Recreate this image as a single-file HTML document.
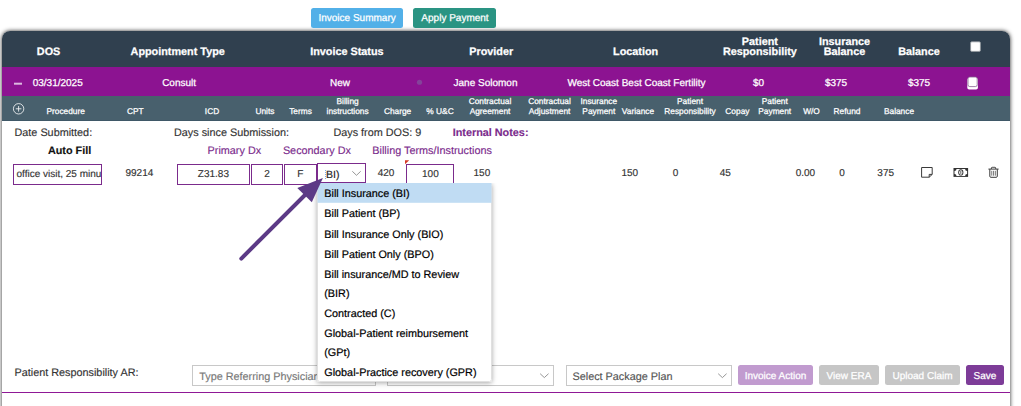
<!DOCTYPE html>
<html>
<head>
<meta charset="utf-8">
<style>
*{box-sizing:border-box;margin:0;padding:0}
html,body{text-rendering:geometricPrecision;width:1021px;height:406px;overflow:hidden;background:#fff;font-family:"Liberation Sans",sans-serif;color:#333}
.t{position:absolute;white-space:nowrap;-webkit-text-stroke:0.15px}
.w{color:#fff;-webkit-text-stroke:0.25px}
.bd{font-weight:bold}
.pu{color:#7b2b8c}
#panel{position:absolute;left:2px;top:31px;width:1008px;height:400px;border-radius:8px 8px 0 0;background:#fff;box-shadow:0 0 4px rgba(0,0,0,.85);overflow:hidden}
#dd{position:absolute;left:317px;top:183px;width:175px;height:199px;background:#fff;border-radius:2px;box-shadow:0 1px 5px rgba(0,0,0,.35);clip-path:inset(0 -12px -12px -12px)}
</style>
</head>
<body>

<div id="panel"></div>
<svg style="position:absolute;left:0;top:0" width="1021" height="406" viewBox="0 0 1021 406">
<defs><clipPath id="pc"><path d="M2 406V39A8 8 0 0 1 10 31H1002A8 8 0 0 1 1010 39V406Z"/></clipPath></defs>
<g clip-path="url(#pc)">
<rect x="2.00" y="67.00" width="1008.00" height="29.00" rx="0" fill="#8c1391"/>
<rect x="2.00" y="30.00" width="1008.00" height="37.00" rx="0" fill="#30404f"/>
<rect x="2.00" y="96.00" width="1008.00" height="25.00" rx="0" fill="#48606d"/>
<rect x="2.00" y="120.00" width="1008.00" height="1.00" rx="0" fill="#3f5867"/>
<rect x="2.00" y="392.00" width="1008.00" height="1.00" rx="0" fill="#8f1896"/>
</g>
<rect x="311.00" y="8.00" width="92.00" height="20.00" rx="2.5" fill="#52b0e8"/>
<rect x="413.00" y="8.00" width="83.00" height="20.00" rx="2.5" fill="#2a9483"/>
<rect x="970.60" y="41.80" width="9.80" height="9.60" rx="1.2" fill="#fff" stroke="#8f969c" stroke-width="0.8"/>
<rect x="14.00" y="82.70" width="8.00" height="2.00" rx="0" fill="#dcb9e0"/>
<circle cx="419.5" cy="82.25" r="2.6" fill="#84439a"/>
<rect x="967.30" y="78.00" width="10.60" height="11.50" rx="1.8" fill="#fff"/>
<rect x="968.00" y="77.00" width="9.20" height="9.60" rx="1.8" fill="#fff" stroke="#85608f" stroke-width="0.8"/>
<circle cx="18.6" cy="108.8" r="5.2" fill="none" stroke="#fff" stroke-width="0.8"/><path d="M15.8 108.8H21.4M18.6 106V111.6" stroke="#fff" stroke-width="0.8" fill="none"/>
<rect x="13.50" y="164.50" width="88.00" height="20.00" rx="0" fill="#fff" stroke="#7b2b8c" stroke-width="1"/>
<rect x="177.50" y="164.50" width="72.00" height="20.00" rx="0" fill="#fff" stroke="#7b2b8c" stroke-width="1"/>
<rect x="251.50" y="164.50" width="31.00" height="20.00" rx="0" fill="#fff" stroke="#7b2b8c" stroke-width="1"/>
<rect x="284.50" y="164.50" width="32.00" height="20.00" rx="0" fill="#fff" stroke="#7b2b8c" stroke-width="1"/>
<rect x="406.50" y="164.50" width="47.00" height="20.00" rx="0" fill="#fff" stroke="#7b2b8c" stroke-width="1"/>
<rect x="317.50" y="163.50" width="48.00" height="19.00" rx="0" fill="#fff" stroke="#7b2b8c" stroke-width="1"/>
<path d="M352.3 171.3L356.5 175.3L360.7 171.3" fill="none" stroke="#8a8a8a" stroke-width="0.9"/>
<path d="M405 160.2H409.2L405 164.3Z" fill="#d63a28"/>
<path d="M325.6 170V180" stroke="#5a9be6" stroke-width="0.9" stroke-dasharray="1 1" fill="none"/>
<rect x="192.50" y="365.50" width="183.00" height="20.00" rx="0" fill="#fff" stroke="#c8c8c8" stroke-width="1"/>
<rect x="387.50" y="365.50" width="166.00" height="20.00" rx="0" fill="#fff" stroke="#c8c8c8" stroke-width="1"/>
<rect x="566.50" y="365.50" width="165.00" height="20.00" rx="0" fill="#fff" stroke="#c8c8c8" stroke-width="1"/>
<path d="M540.15 373.7L544.35 377.6L548.55 373.7" fill="none" stroke="#8a8a8a" stroke-width="0.9"/>
<path d="M718.20 373.7L722.4 377.6L726.60 373.7" fill="none" stroke="#8a8a8a" stroke-width="0.9"/>
<rect x="738.00" y="365.00" width="75.00" height="20.00" rx="2.5" fill="#c19bcf"/>
<rect x="819.00" y="365.00" width="60.00" height="20.00" rx="2.5" fill="#c6c6c6"/>
<rect x="885.00" y="365.00" width="75.00" height="20.00" rx="2.5" fill="#c6c6c6"/>
<rect x="966.00" y="365.00" width="38.00" height="20.00" rx="2.5" fill="#7d3c98"/>
<g fill="none" stroke="#3a3a3a" stroke-width="1"><path d="M921.6 167.5H932.2V174.4L929.2 177.2H921.6Z" stroke-linejoin="round"/><path d="M932.2 174.4H929.2V177.2" stroke-width="1"/></g>
<g><rect x="953.5" y="168" width="14.6" height="8.9" fill="#333"/><path d="M956.5 169H965.1A2 2 0 0 0 967.1 171V173.9A2 2 0 0 0 965.1 175.9H956.5A2 2 0 0 0 954.5 173.9V171A2 2 0 0 0 956.5 169Z" fill="#fff"/><ellipse cx="960.8" cy="172.45" rx="2.6" ry="3.1" fill="#333"/><ellipse cx="960.8" cy="172.45" rx="1.65" ry="2.2" fill="#fff"/><rect x="960.45" y="171" width="0.8" height="2.9" fill="#333"/></g>
<g fill="none" stroke="#3a3a3a" stroke-width="1"><path d="M988.4 169.1H998.6"/><path d="M991.4 169V168Q991.4 167.3 992.1 167.3H995Q995.7 167.3 995.7 168V169" stroke-width="0.9"/><path d="M989.8 169.2V176.2Q989.8 177.3 990.9 177.3H996.2Q997.3 177.3 997.3 176.2V169.2"/><path d="M991.75 170.8V175.7M993.55 170.8V175.7M995.35 170.8V175.7" stroke-width="0.8" stroke="#555"/></g>
</svg>
<div class="t w" style="left:357.1px;top:13px;font-size:10px;line-height:11px;transform:translateX(-50%);">Invoice Summary</div>
<div class="t w" style="left:455px;top:13px;font-size:10px;line-height:11px;transform:translateX(-50%);">Apply Payment</div>
<div class="t w bd" style="left:48.6px;top:46px;font-size:10.83px;line-height:12px;transform:translateX(-50%);">DOS</div>
<div class="t w bd" style="left:177.7px;top:46px;font-size:10.83px;line-height:12px;transform:translateX(-50%);">Appointment Type</div>
<div class="t w bd" style="left:346.9px;top:46px;font-size:10.83px;line-height:12px;transform:translateX(-50%);">Invoice Status</div>
<div class="t w bd" style="left:491.25px;top:46px;font-size:10.83px;line-height:12px;transform:translateX(-50%);">Provider</div>
<div class="t w bd" style="left:635.6px;top:46px;font-size:10.83px;line-height:12px;transform:translateX(-50%);">Location</div>
<div class="t w bd" style="left:919px;top:46px;font-size:10.83px;line-height:12px;transform:translateX(-50%);">Balance</div>
<div class="t w bd" style="left:759.9px;top:36px;font-size:10.83px;line-height:12px;transform:translateX(-50%);">Patient</div>
<div class="t w bd" style="left:759.9px;top:46px;font-size:10.83px;line-height:12px;transform:translateX(-50%);">Responsibility</div>
<div class="t w bd" style="left:844.5px;top:36px;font-size:10.83px;line-height:12px;transform:translateX(-50%);">Insurance</div>
<div class="t w bd" style="left:844.5px;top:46px;font-size:10.83px;line-height:12px;transform:translateX(-50%);">Balance</div>
<div class="t w" style="left:32.7px;top:78px;font-size:10px;line-height:11px;">03/31/2025</div>
<div class="t w" style="left:179.1px;top:78px;font-size:10px;line-height:11px;transform:translateX(-50%);">Consult</div>
<div class="t w" style="left:340px;top:78px;font-size:10px;line-height:11px;transform:translateX(-50%);">New</div>
<div class="t w" style="left:485.5px;top:78px;font-size:10px;line-height:11px;transform:translateX(-50%);">Jane Solomon</div>
<div class="t w" style="left:636.5px;top:78px;font-size:10px;line-height:11px;transform:translateX(-50%);">West Coast Best Coast Fertility</div>
<div class="t w" style="left:758.5px;top:78px;font-size:10px;line-height:11px;transform:translateX(-50%);">$0</div>
<div class="t w" style="left:836px;top:78px;font-size:10px;line-height:11px;transform:translateX(-50%);">$375</div>
<div class="t w" style="left:919px;top:78px;font-size:10px;line-height:11px;transform:translateX(-50%);">$375</div>
<div class="t w" style="left:65.7px;top:106px;font-size:8.33px;line-height:10px;transform:translateX(-50%);">Procedure</div>
<div class="t w" style="left:135.4px;top:106px;font-size:8.33px;line-height:10px;transform:translateX(-50%);">CPT</div>
<div class="t w" style="left:212px;top:106px;font-size:8.33px;line-height:10px;transform:translateX(-50%);">ICD</div>
<div class="t w" style="left:264.9px;top:106px;font-size:8.33px;line-height:10px;transform:translateX(-50%);">Units</div>
<div class="t w" style="left:300.5px;top:106px;font-size:8.33px;line-height:10px;transform:translateX(-50%);">Terms</div>
<div class="t w" style="left:397.6px;top:106px;font-size:8.33px;line-height:10px;transform:translateX(-50%);">Charge</div>
<div class="t w" style="left:440px;top:106px;font-size:8.33px;line-height:10px;transform:translateX(-50%);">% U&amp;C</div>
<div class="t w" style="left:638px;top:106px;font-size:8.33px;line-height:10px;transform:translateX(-50%);">Variance</div>
<div class="t w" style="left:737.4px;top:106px;font-size:8.33px;line-height:10px;transform:translateX(-50%);">Copay</div>
<div class="t w" style="left:811.5px;top:106px;font-size:8.33px;line-height:10px;transform:translateX(-50%);">W/O</div>
<div class="t w" style="left:847px;top:106px;font-size:8.33px;line-height:10px;transform:translateX(-50%);">Refund</div>
<div class="t w" style="left:899px;top:106px;font-size:8.33px;line-height:10px;transform:translateX(-50%);">Balance</div>
<div class="t w" style="left:347.6px;top:96px;font-size:8.33px;line-height:10px;transform:translateX(-50%);">Billing</div>
<div class="t w" style="left:347.6px;top:106px;font-size:8.33px;line-height:10px;transform:translateX(-50%);">instructions</div>
<div class="t w" style="left:490px;top:96px;font-size:8.33px;line-height:10px;transform:translateX(-50%);">Contractual</div>
<div class="t w" style="left:490px;top:106px;font-size:8.33px;line-height:10px;transform:translateX(-50%);">Agreement</div>
<div class="t w" style="left:549.5px;top:96px;font-size:8.33px;line-height:10px;transform:translateX(-50%);">Contractual</div>
<div class="t w" style="left:549.5px;top:106px;font-size:8.33px;line-height:10px;transform:translateX(-50%);">Adjustment</div>
<div class="t w" style="left:598.8px;top:96px;font-size:8.33px;line-height:10px;transform:translateX(-50%);">Insurance</div>
<div class="t w" style="left:598.8px;top:106px;font-size:8.33px;line-height:10px;transform:translateX(-50%);">Payment</div>
<div class="t w" style="left:690px;top:96px;font-size:8.33px;line-height:10px;transform:translateX(-50%);">Patient</div>
<div class="t w" style="left:690px;top:106px;font-size:8.33px;line-height:10px;transform:translateX(-50%);">Responsibility</div>
<div class="t w" style="left:774.75px;top:96px;font-size:8.33px;line-height:10px;transform:translateX(-50%);">Patient</div>
<div class="t w" style="left:774.75px;top:106px;font-size:8.33px;line-height:10px;transform:translateX(-50%);">Payment</div>
<div class="t " style="left:14.5px;top:127px;font-size:10.83px;line-height:12px;">Date Submitted:</div>
<div class="t " style="left:174px;top:127px;font-size:10.83px;line-height:12px;">Days since Submission:</div>
<div class="t " style="left:333.4px;top:127px;font-size:10.83px;line-height:12px;">Days from DOS: 9</div>
<div class="t pu bd" style="left:452.7px;top:127px;font-size:10.83px;line-height:12px;">Internal Notes:</div>
<div class="t bd" style="left:69.6px;top:145px;font-size:10.83px;line-height:12px;transform:translateX(-50%);color:#111;">Auto Fill</div>
<div class="t pu" style="left:207.6px;top:145px;font-size:10.83px;line-height:12px;">Primary Dx</div>
<div class="t pu" style="left:282.9px;top:145px;font-size:10.83px;line-height:12px;">Secondary Dx</div>
<div class="t pu" style="left:372.3px;top:145px;font-size:10.83px;line-height:12px;">Billing Terms/Instructions</div>
<div style="position:absolute;left:14px;top:165px;width:87px;height:18px;overflow:hidden"><div class="t" style="left:2.5px;top:4px;font-size:10px;line-height:11px">office visit, 25 minutes</div></div>
<div class="t " style="left:213.4px;top:169px;font-size:10px;line-height:11px;transform:translateX(-50%);">Z31.83</div>
<div class="t " style="left:267px;top:169px;font-size:10px;line-height:11px;transform:translateX(-50%);">2</div>
<div class="t " style="left:300.4px;top:169px;font-size:10px;line-height:11px;transform:translateX(-50%);">F</div>
<div class="t " style="left:326.1px;top:169px;font-size:10.5px;line-height:12px;color:#222;">BI)</div>
<div class="t " style="left:430.4px;top:169px;font-size:10px;line-height:11px;transform:translateX(-50%);">100</div>
<div class="t " style="left:139.4px;top:168px;font-size:10px;line-height:11px;transform:translateX(-50%);">99214</div>
<div class="t " style="left:386px;top:168px;font-size:10px;line-height:11px;transform:translateX(-50%);">420</div>
<div class="t " style="left:481.9px;top:168px;font-size:10px;line-height:11px;transform:translateX(-50%);">150</div>
<div class="t " style="left:629.75px;top:168px;font-size:10px;line-height:11px;transform:translateX(-50%);">150</div>
<div class="t " style="left:675.5px;top:168px;font-size:10px;line-height:11px;transform:translateX(-50%);">0</div>
<div class="t " style="left:725.25px;top:168px;font-size:10px;line-height:11px;transform:translateX(-50%);">45</div>
<div class="t " style="left:805.4px;top:168px;font-size:10px;line-height:11px;transform:translateX(-50%);">0.00</div>
<div class="t " style="left:842px;top:168px;font-size:10px;line-height:11px;transform:translateX(-50%);">0</div>
<div class="t " style="left:885.7px;top:168px;font-size:10px;line-height:11px;transform:translateX(-50%);">375</div>
<div class="t " style="left:14.5px;top:367px;font-size:10.83px;line-height:12px;">Patient Responsibility AR:</div>
<div class="t " style="left:199.25px;top:371px;font-size:10.83px;line-height:12px;color:#777;">Type Referring Physician</div>
<div class="t " style="left:572.5px;top:371px;font-size:10.83px;line-height:12px;color:#555;">Select Package Plan</div>
<div class="t w" style="left:775.5px;top:371px;font-size:10px;line-height:11px;transform:translateX(-50%);">Invoice Action</div>
<div class="t w" style="left:849.0px;top:371px;font-size:10px;line-height:11px;transform:translateX(-50%);">View ERA</div>
<div class="t w" style="left:922.5px;top:371px;font-size:10px;line-height:11px;transform:translateX(-50%);">Upload Claim</div>
<div class="t w" style="left:985.0px;top:371px;font-size:10px;line-height:11px;transform:translateX(-50%);">Save</div>
<div id="dd"></div>
<svg style="position:absolute;left:0;top:0" width="1021" height="406" viewBox="0 0 1021 406"><rect x="317.50" y="183.50" width="174.00" height="198.00" rx="2" fill="#fff" stroke="#e0e0e0" stroke-width="1"/><rect x="317.50" y="183.00" width="174.00" height="19.80" rx="0" fill="#c0dcf3"/></svg>
<div class="t " style="left:324.25px;top:188px;font-size:10.83px;line-height:12px;color:#000;-webkit-text-stroke:0.2px #000;">Bill Insurance (BI)</div>
<div class="t " style="left:324.25px;top:208px;font-size:10.83px;line-height:12px;color:#000;-webkit-text-stroke:0.2px #000;">Bill Patient (BP)</div>
<div class="t " style="left:324.25px;top:229px;font-size:10.83px;line-height:12px;color:#000;-webkit-text-stroke:0.2px #000;">Bill Insurance Only (BIO)</div>
<div class="t " style="left:324.25px;top:249px;font-size:10.83px;line-height:12px;color:#000;-webkit-text-stroke:0.2px #000;">Bill Patient Only (BPO)</div>
<div class="t " style="left:324.25px;top:269px;font-size:10.83px;line-height:12px;color:#000;-webkit-text-stroke:0.2px #000;">Bill insurance/MD to Review</div>
<div class="t " style="left:324.25px;top:288px;font-size:10.83px;line-height:12px;color:#000;-webkit-text-stroke:0.2px #000;">(BIR)</div>
<div class="t " style="left:324.25px;top:308px;font-size:10.83px;line-height:12px;color:#000;-webkit-text-stroke:0.2px #000;">Contracted (C)</div>
<div class="t " style="left:324.25px;top:328px;font-size:10.83px;line-height:12px;color:#000;-webkit-text-stroke:0.2px #000;">Global-Patient reimbursement</div>
<div class="t " style="left:324.25px;top:347px;font-size:10.83px;line-height:12px;color:#000;-webkit-text-stroke:0.2px #000;">(GPt)</div>
<div class="t " style="left:324.25px;top:367px;font-size:10.83px;line-height:12px;color:#000;-webkit-text-stroke:0.2px #000;">Global-Practice recovery (GPR)</div>
<svg style="position:absolute;left:0;top:0" width="1021" height="406" viewBox="0 0 1021 406"><path d="M241.3 258.6L305 195" stroke="#5c3a86" stroke-width="4" stroke-linecap="round" fill="none"/><path d="M322.9 177.9L311.8 202.2L297.3 188Z" fill="#5c3a86"/></svg>
</body></html>
